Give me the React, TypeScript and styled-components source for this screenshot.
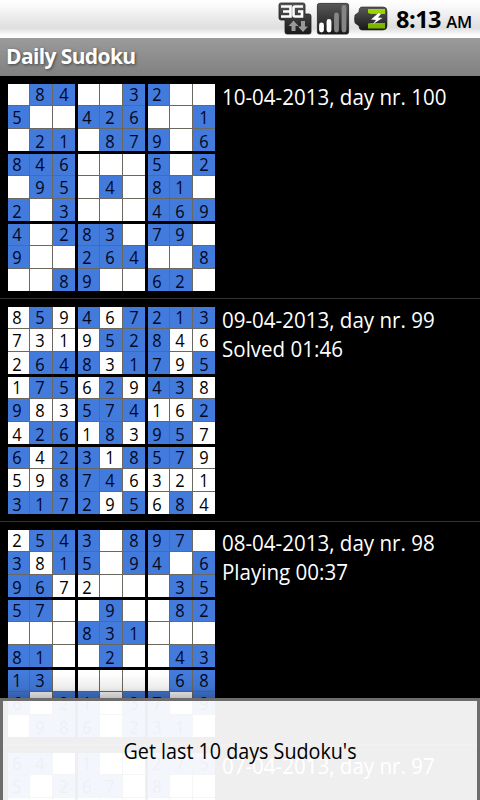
import React from "react";
import styled, { createGlobalStyle } from "styled-components";

const GlobalStyle = createGlobalStyle`
  html, body { margin: 0; background: #000; overflow: hidden; }
  * { box-sizing: border-box; }
`;

const Screen = styled.div`
  position: relative;
  display: flex;
  flex-direction: column;
  width: 480px;
  height: 800px;
  overflow: hidden;
  background: #000;
  font-family: "Open Sans", "Noto Sans", sans-serif;
`;

const StatusBar = styled.header`
  display: flex;
  flex: none;
  justify-content: flex-end;
  height: 38px;
  padding-right: 9px;
  background: linear-gradient(#fff 0, #fbfbfb 5px, #dedede 28px, #e6e6e6 30px, #f8f8f8 34px, #fff 38px);
`;

const StatusIcons = styled.svg`
  flex: none;
  width: 112px;
  height: 38px;
`;

const Clock = styled.div`
  display: flex;
  align-items: baseline;
  justify-content: space-between;
  width: 76px;
  margin-left: 7px;
  margin-right: -1px;
  color: #000;
  line-height: 38px;
  white-space: nowrap;
`;

const Time = styled.span`
  width: 47px;
  font-size: 23.5px;
  font-weight: 700;
  letter-spacing: -0.5px;
`;

const Meridiem = styled.span`
  font-size: 16.5px;
  font-weight: 600;
  letter-spacing: -0.2px;
`;

const TitleBar = styled.h1`
  flex: none;
  height: 38px;
  margin: 0;
  padding-left: 6px;
  background: linear-gradient(#9b9b9b, #808080);
  color: #fff;
  font-size: 21px;
  font-weight: 700;
  line-height: 37px;
  letter-spacing: -0.62px;
  text-shadow: 1px 1px 3px #444;
`;

const PuzzleList = styled.main`
  flex: none;
`;

const PuzzleRow = styled.article`
  display: flex;
  height: 223px;
  padding: 8px 0 0 8px;
  border-bottom: 1px solid #343434;
`;

const Board = styled.div`
  display: grid;
  flex: none;
  grid-template-columns: repeat(3, 67px);
  grid-template-rows: repeat(3, 67px);
  gap: 3px;
  width: 207px;
  height: 207px;
`;

const Box = styled.div`
  display: grid;
  grid-template-columns: 21px 22px 22px;
  grid-template-rows: 21px 22px 22px;
  gap: 1px;
  background: #6b6862;
`;

const Cell = styled.div<{ $given: boolean; $row: number; $col: number }>`
  padding-top: ${(p) => [0, 1, 2][p.$row]}px;
  padding-left: ${(p) => [4, 5, 6][p.$col]}px;
  background: ${(p) => (p.$given ? "#437bdc" : "#fff")};
  color: ${(p) => (p.$given ? "#000725" : "#000")};
  font-size: 17.5px;
  line-height: 20px;
`;

const Digit = styled.span`
  display: inline-block;
  transform: scaleX(0.94);
`;

const Info = styled.div`
  margin-top: -2px;
  padding-left: 7px;
  color: #fff;
  font-size: 22px;
  line-height: 29px;
  white-space: nowrap;
`;

const Line = styled.div`
  width: max-content;
  transform: scaleX(0.934);
  transform-origin: left;
`;

const Footer = styled.footer`
  position: absolute;
  inset: 674px 0 0;
  display: flex;
  flex-direction: column;
`;

const Shade = styled.div`
  height: 24px;
  background: linear-gradient(rgba(0, 0, 0, 0), rgba(0, 0, 0, 0.08) 14px, rgba(0, 0, 0, 0.25));
`;

const DownloadButton = styled.button`
  flex: 1;
  padding: 0 0 2px;
  border: 3px solid #6d6d6d;
  border-bottom: 0;
  background: rgba(255, 255, 255, 0.937);
  background-clip: padding-box;
  color: #000;
  font: 22px/30px "Open Sans", "Noto Sans", sans-serif;
`;

const ButtonLabel = styled.span`
  display: inline-block;
  transform: scaleX(0.896);
  white-space: nowrap;
`;

type Puzzle = { title: string; status?: string; digits: string[]; filled: string[] };

// "digits" holds the nine rows, with "." for an empty cell;
// "filled" marks with "x" the digits entered by the player.
const puzzles: Puzzle[] = [
  {
    title: "10-04-2013, day nr. 100",
    digits: [
      ".84..32..", "5..426..1", ".21.879.6",
      "846...5.2", ".95.4.81.", "2.3...469",
      "4.283.79.", "9..264..8", "..89..62.",
    ],
    filled: [],
  },
  {
    title: "09-04-2013, day nr. 99",
    status: "Solved 01:46",
    digits: [
      "859467213", "731952846", "264831795",
      "175629438", "983574162", "426183957",
      "642318579", "598746321", "317295684",
    ],
    filled: [
      "x.x.x....", "xxxx...xx", "x...x..x.",
      "x..x.x..x", ".xx...xx.", "x..x.x..x",
      ".x..x...x", "xx...xxxx", "....x.x.x",
    ],
  },
  {
    title: "08-04-2013, day nr. 98",
    status: "Playing 00:37",
    digits: [
      "2543.897.", "3815.94.6", "9672...35",
      "57..9..82", "...831...", "81..2..43",
      "13.....68", "6.21.37.9", ".986.231.",
    ],
    filled: ["x........", ".x.......", "..xx....."],
  },
  {
    title: "07-04-2013, day nr. 97",
    digits: [
      "64.1..275", "5.267.8..", ".........",
      ".........", ".........", ".........",
      ".........", ".........", ".........",
    ],
    filled: [],
  },
];

const indices = [0, 1, 2, 3, 4, 5, 6, 7, 8];

function SudokuBoard({ digits, filled }: Pick<Puzzle, "digits" | "filled">) {
  return (
    <Board>
      {indices.map((box) => (
        <Box key={box}>
          {indices.map((cell) => {
            const row = Math.floor(cell / 3);
            const col = cell % 3;
            const y = Math.floor(box / 3) * 3 + row;
            const x = (box % 3) * 3 + col;
            const digit = digits[y][x];
            const given = digit !== "." && filled[y]?.[x] !== "x";
            return (
              <Cell key={cell} $given={given} $row={row} $col={col}>
                {digit !== "." && <Digit>{digit}</Digit>}
              </Cell>
            );
          })}
        </Box>
      ))}
    </Board>
  );
}

function Icons() {
  return (
    <StatusIcons viewBox="276 0 112 38" aria-hidden="true">
      <defs>
        <linearGradient id="dark" x1="0" y1="0" x2="0" y2="1">
          <stop offset="0" stopColor="#585858" />
          <stop offset="1" stopColor="#181818" />
        </linearGradient>
        <linearGradient id="cell" x1="0" y1="0" x2="0" y2="1">
          <stop offset="0" stopColor="#a2d800" />
          <stop offset="1" stopColor="#78b000" />
        </linearGradient>
      </defs>
      <path d="M280 3h22q2 0 2 2v9h4q2 0 2 2v16q0 2-2 2h-22q-2 0-2-2V20h-4q-2 0-2-2V5q0-2 2-2z" fill="url(#dark)" stroke="#222" strokeWidth=".8" />
      <path d="M280 6.500h9.500v10H280M282 11.500h7.500M302 6.500h-8q-1.500 0-1.500 1.500v7q0 1.500 1.500 1.500h7V11.500h-4" fill="none" stroke="#fff" strokeWidth="2.600" />
      <path d="M292.500 20.500l5 5.500h-3v5h-4v-5h-3z" fill="#999" />
      <path d="M302 32l5-5.500h-3v-5.500h-4v5.500h-3z" fill="#999" />
      <rect x="316.400" y="3.400" width="31.200" height="30.700" rx="2" fill="url(#dark)" stroke="#222" strokeWidth=".8" />
      <g strokeWidth="4.800" strokeLinecap="round">
        <path d="M320.500 25v5M328 21.500v8.500" stroke="#fff" />
        <path d="M335.500 15v15M343 7.500v22.500" stroke="#858585" />
      </g>
      <path d="M361 7h21q4 0 4 4v15q0 4-4 4h-21q-3 0-3-4l-4-3q-1-4 0-8l4-3q0-5 3-5z" fill="url(#dark)" stroke="#222" strokeWidth=".6" />
      <path d="M367 9h17v5h-14l-3-1zM367 23.500l3-.5h14v5.500h-17z" fill="url(#cell)" />
      <path d="M377.500 13l-7.500 6.500 5 .5-3 4 9.500-6-4.500-.5 3-3.500z" fill="#fff" />
    </StatusIcons>
  );
}

export default function App() {
  return (
    <Screen>
      <GlobalStyle />
      <StatusBar>
        <Icons />
        <Clock>
          <Time>8:13</Time>
          <Meridiem>AM</Meridiem>
        </Clock>
      </StatusBar>
      <TitleBar>Daily Sudoku</TitleBar>
      <PuzzleList>
        {puzzles.map((puzzle) => (
          <PuzzleRow key={puzzle.title}>
            <SudokuBoard digits={puzzle.digits} filled={puzzle.filled} />
            <Info>
              <Line>{puzzle.title}</Line>
              {puzzle.status && <Line>{puzzle.status}</Line>}
            </Info>
          </PuzzleRow>
        ))}
      </PuzzleList>
      <Footer>
        <Shade />
        <DownloadButton type="button">
          <ButtonLabel>Get last 10 days Sudoku's</ButtonLabel>
        </DownloadButton>
      </Footer>
    </Screen>
  );
}
